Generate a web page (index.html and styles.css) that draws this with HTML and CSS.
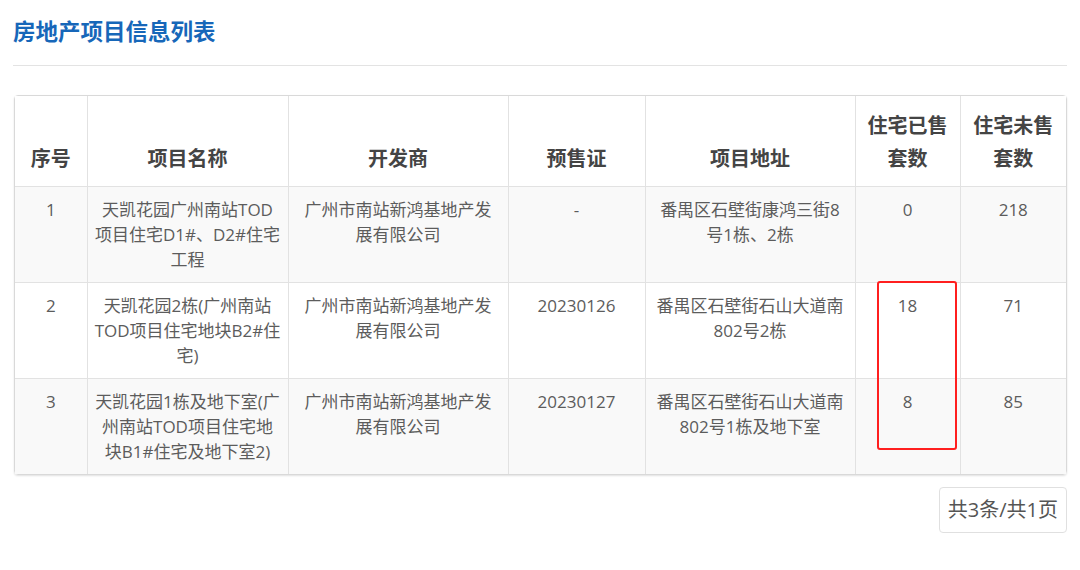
FILE: index.html
```html
<!DOCTYPE html>
<html lang="zh-CN">
<head>
<meta charset="utf-8">
<title>房地产项目信息列表</title>
<link rel="stylesheet" href="styles.css">
</head>
<body>
<div class="page">
  <h2 class="title">房地产项目信息列表</h2>
  <div class="divider"></div>
  <div class="table-wrap">
    <table class="list">
      <colgroup>
        <col class="c-no"><col class="c-name"><col class="c-dev"><col class="c-permit"><col class="c-addr"><col class="c-sold"><col class="c-unsold">
      </colgroup>
      <thead>
        <tr>
          <th>序号</th>
          <th>项目名称</th>
          <th>开发商</th>
          <th>预售证</th>
          <th>项目地址</th>
          <th>住宅已售套数</th>
          <th>住宅未售套数</th>
        </tr>
      </thead>
      <tbody>
        <tr class="odd">
          <td>1</td>
          <td>天凯花园广州南站TOD项目住宅D1#、D2#住宅工程</td>
          <td>广州市南站新鸿基地产发展有限公司</td>
          <td>-</td>
          <td>番禺区石壁街康鸿三街8号1栋、2栋</td>
          <td>0</td>
          <td>218</td>
        </tr>
        <tr>
          <td>2</td>
          <td>天凯花园2栋(广州南站TOD项目住宅地块B2#住宅)</td>
          <td>广州市南站新鸿基地产发展有限公司</td>
          <td>20230126</td>
          <td>番禺区石壁街石山大道南802号2栋</td>
          <td class="mark-cell">18<span class="highlight"></span></td>
          <td>71</td>
        </tr>
        <tr class="odd">
          <td>3</td>
          <td>天凯花园1栋及地下室(广州南站TOD项目住宅地块B1#住宅及地下室2)</td>
          <td>广州市南站新鸿基地产发展有限公司</td>
          <td>20230127</td>
          <td>番禺区石壁街石山大道南802号1栋及地下室</td>
          <td>8</td>
          <td>85</td>
        </tr>
      </tbody>
    </table>
  </div>
  <div class="pager">
    <span class="pager-info">共3条/共1页</span>
  </div>
</div>
</body>
</html>
```

FILE: styles.css
```css
* { box-sizing: border-box; }
html, body { margin: 0; padding: 0; background: #fff; }
body {
  font-family: "Open Sans", "Noto Sans CJK SC", sans-serif;
  color: #555;
}
.page {
  padding: 0 13px;
}
.title {
  margin: 0;
  padding-top: 17px;
  height: 48px;
  font-size: 22.5px;
  line-height: 30px;
  font-weight: 700;
  color: #1767b9;
}
.divider {
  height: 1px;
  background: #e3e3e3;
  margin-top: 17px;
}
.table-wrap {
  margin-top: 29px;
  margin-left: 1px;
  border: 1px solid #d9d9d9;
  border-radius: 4px;
  box-shadow: 0 1px 2px rgba(0, 0, 0, 0.12);
}
.list {
  width: 100%;
  border-collapse: collapse;
  table-layout: fixed;
}
.c-no { width: 72px; }
.c-name { width: 201px; }
.c-dev { width: 220px; }
.c-permit { width: 137px; }
.c-addr { width: 210px; }
.c-sold { width: 105px; }
.c-unsold { width: auto; }

.list th,
.list td {
  border-left: 1px solid #e2e2e2;
  border-top: 1px solid #e2e2e2;
  text-align: center;
}
.list th:first-child,
.list td:first-child { border-left: none; }
.list thead tr:first-child th { border-top: none; }

.list th {
  font-size: 20px;
  font-weight: 700;
  color: #444;
  line-height: 33px;
  padding: 13px 8px 11px;
  vertical-align: bottom;
  background: #fff;
}
.list td {
  font-size: 17px;
  line-height: 25px;
  color: #5c5c5c;
  padding: 10px 7px 10px;
  vertical-align: top;
  background: #fff;
}
.list tr.odd td { background: #f9f9f9; }
.list td:nth-child(3) { padding-left: 10px; padding-right: 10px; }
.list td:nth-child(5) { padding-left: 8px; padding-right: 8px; }

.mark-cell { position: relative; }
.highlight {
  position: absolute;
  left: 21px;
  top: -2px;
  width: 80px;
  height: 169px;
  border: 2px solid #ff1f1f;
  border-radius: 3px;
  pointer-events: none;
  z-index: 2;
}

.pager {
  display: flex;
  justify-content: flex-end;
  margin-top: 12px;
}
.pager-info {
  display: inline-block;
  height: 46px;
  padding: 0 8px;
  border: 1px solid #e0e0e0;
  border-radius: 4px;
  font-size: 20px;
  line-height: 44px;
  color: #555;
}
```
